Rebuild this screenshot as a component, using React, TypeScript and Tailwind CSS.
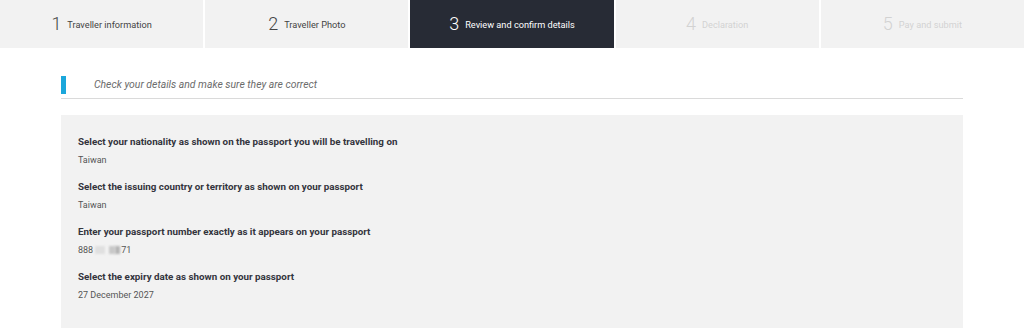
import React from "react";

const steps = [
  { n: 1, label: "Traveller information", state: "done" },
  { n: 2, label: "Traveller Photo", state: "done" },
  { n: 3, label: "Review and confirm details", state: "active" },
  { n: 4, label: "Declaration", state: "todo" },
  { n: 5, label: "Pay and submit", state: "todo" },
];

const font = { fontFamily: "Roboto, 'Open Sans', sans-serif" };

const Field = ({ label, children }: { label: string; children: React.ReactNode }) => (
  <div className="flex flex-col gap-[4px]">
    <div className="text-[9.8px] leading-[14px] font-bold text-[#34353d]">{label}</div>
    <div className="text-[9px] leading-[14px] text-[#555]">{children}</div>
  </div>
);

export default function App() {
  return (
    <div className="w-[1024px] h-[328px] bg-white overflow-hidden" style={font}>
      <div className="flex gap-[2px] h-[48px]">
        {steps.map((s) => {
          const active = s.state === "active";
          const todo = s.state === "todo";
          return (
            <div
              key={s.n}
              className={`flex-1 flex items-center justify-center gap-[6px] ${
                active ? "bg-[#272b35] text-white" : "bg-[#f2f2f2]"
              } ${todo ? "text-[#d2d2d2]" : active ? "" : "text-[#444]"}`}
            >
              <span className="text-[18px] font-light leading-none">{s.n}</span>
              <span className="text-[9.2px] leading-none mt-[2px]">{s.label}</span>
            </div>
          );
        })}
      </div>

      <div className="w-[902px] mx-auto pt-[28px]">
        <div className="flex items-center border-b border-[#dadada] pb-[4px]">
          <div className="w-[5px] h-[18px] bg-[#1ba7db]" />
          <div className="ml-[28px] text-[10.4px] italic text-[#6b6b6b]">
            Check your details and make sure they are correct
          </div>
        </div>

        <div className="mt-[16px] bg-[#f2f2f2] h-[220px] pl-[17px] pt-[20px] flex flex-col gap-[13px]">
          <Field label="Select your nationality as shown on the passport you will be travelling on">
            Taiwan
          </Field>
          <Field label="Select the issuing country or territory as shown on your passport">
            Taiwan
          </Field>
          <Field label="Enter your passport number exactly as it appears on your passport">
            <span className="inline-flex items-center">
              888
              <span className="inline-block w-[10px] h-[8px] bg-[#e0e0e0] blur-[1px] ml-[2px]" />
              <span className="inline-block w-[6px] h-[8px] bg-[#c8c8c8] blur-[1px] ml-[4px]" />
              <span className="inline-block w-[5px] h-[8px] bg-[#b5b5b5] blur-[1px] mr-[1px]" />
              71
            </span>
          </Field>
          <Field label="Select the expiry date as shown on your passport">27 December 2027</Field>
        </div>
      </div>
    </div>
  );
}
